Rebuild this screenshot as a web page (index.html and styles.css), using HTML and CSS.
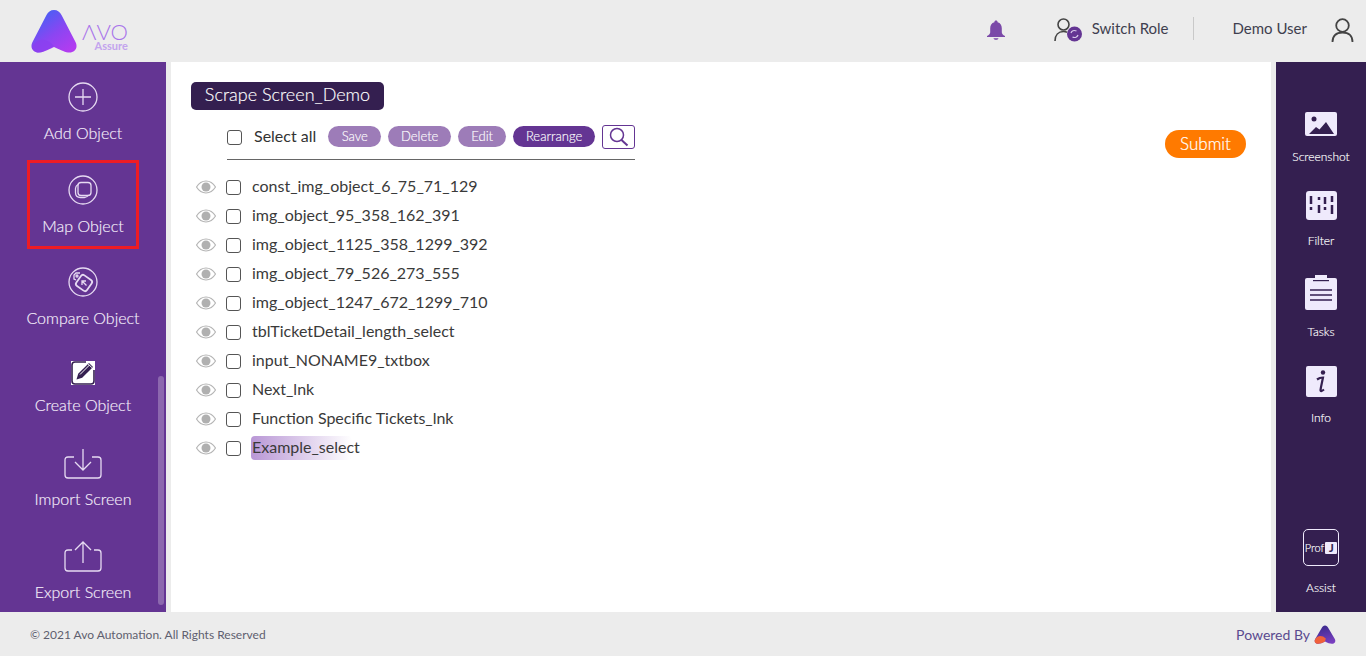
FILE: index.html
```html
<!DOCTYPE html>
<html lang="en">
<head>
  <meta charset="UTF-8" />
  <title>Avo Assure</title>
  <link rel="stylesheet" href="styles.css">
</head>
<body>
  <svg width="0" height="0" class="defs">
    <defs>
      <linearGradient id="logoGrad" x1="0.2" y1="0" x2="0.9" y2="0.9">
        <stop offset="0" stop-color="#3f63f5"/>
        <stop offset="0.55" stop-color="#8a46f2"/>
        <stop offset="1" stop-color="#b23cf0"/>
      </linearGradient>
      <linearGradient id="miniGrad" x1="0.3" y1="0" x2="0.6" y2="1">
        <stop offset="0" stop-color="#3a2a8c"/>
        <stop offset="1" stop-color="#7a3fc0"/>
      </linearGradient>
      <symbol id="eye" viewBox="0 0 20 14">
        <path d="M0.500 7C3 3 6.200 1 10 1s7 2 9.500 6c-2.500 4-5.700 6-9.500 6S3 11 0.500 7z" fill="none" stroke="#b5b5b5" stroke-width="1.200"/>
        <circle cx="10" cy="7" r="4.500" fill="#b0b0b0"/>
      </symbol>
    </defs>
  </svg>

  <!-- header -->
  <header class="topbar">
    <div class="logo">
      <svg class="logo-mark" width="48" height="44" viewBox="0 0 48 44">
        <path d="M24 1c3.600 0 6 2 7.500 5l14 27c3 6-1 10.500-6 10.500-4 0-8-2-15.500-5.500-7 3.500-11.500 5.500-15.500 5.500-5 0-9-4.500-6-10.500l14-27C18 3 20.400 1 24 1z" fill="url(#logoGrad)"/>
        <path d="M2 38c5-9 14-10 22-1-7 3.500-11.500 6.500-15.500 6.500C5 43.500 3 41 2 38z" fill="#8a3ff0" opacity="0.7"/>
      </svg>
      <div class="logo-text">
        <span class="logo-avo">ΛVO</span>
        <span class="logo-sub">Assure</span>
      </div>
    </div>
    <div class="topbar-right">
      <svg class="bell head-icon" width="20" height="20" viewBox="0 0 20 20">
        <path d="M10 0.500c1 0 1.600 0.700 1.600 1.700 2.900 0.800 4.200 3.100 4.200 6v4c0 1.500 1 2.700 3.200 3.800v1H1v-1c2.200-1.100 3.200-2.300 3.200-3.800v-4c0-2.900 1.300-5.200 4.200-6C8.400 1.200 9 0.500 10 0.500z" fill="#7b4aa8"/>
        <path d="M7.500 18.200h5c-0.300 1-1.300 1.500-2.500 1.500s-2.200-0.500-2.500-1.500z" fill="#7b4aa8"/>
      </svg>
      <div class="switch-role">
        <svg class="head-icon" width="28" height="24" viewBox="0 0 28 24">
          <circle cx="9.500" cy="6.500" r="5.500" fill="none" stroke="#444" stroke-width="1.600"/>
          <path d="M1 23c0-6 3.500-9.500 8.500-9.500 1.500 0 2.500 0.300 3.500 0.800" fill="none" stroke="#444" stroke-width="1.600"/>
          <circle cx="20.500" cy="16" r="7.500" fill="#643593"/>
          <path d="M17 15c0.500-2 3-3.200 5.500-2M24 17c-0.500 2-3 3.200-5.500 2" fill="none" stroke="#d8c8ea" stroke-width="1.200"/>
        </svg>
        <span>Switch Role</span>
      </div>
      <div class="divider"></div>
      <span class="user-name">Demo User</span>
      <svg class="head-icon" width="24" height="24" viewBox="0 0 24 24">
        <circle cx="11.500" cy="7.500" r="6.300" fill="none" stroke="#444" stroke-width="1.800"/>
        <path d="M1.500 24c0-6.500 3.500-9.500 10-9.500s10 3 10 9.500" fill="none" stroke="#444" stroke-width="1.800"/>
      </svg>
    </div>
  </header>

  <div class="middle">
    <!-- left menu -->
    <nav class="sidebar">
      <div class="side-item add">
        <svg class="side-icon" width="30" height="30" viewBox="0 0 30 30">
          <circle cx="15" cy="15" r="14" class="ln"/>
          <path d="M15 7v16M7 15h16" class="ln"/>
        </svg>
        <span>Add Object</span>
      </div>
      <div class="side-item active">
        <svg class="side-icon" width="30" height="30" viewBox="0 0 30 30">
          <circle cx="15" cy="15" r="14" class="ln"/>
          <rect x="10" y="7.500" width="13" height="13" rx="3" class="ln"/>
          <path d="M10 9.500c-1.500 1-2.500 2-2.500 4v4c0 3 2 5 5 5h4c2 0 3-1 4-2.500" class="ln"/>
        </svg>
        <span>Map Object</span>
      </div>
      <div class="side-item compare">
        <svg class="side-icon" width="30" height="30" viewBox="0 0 30 30">
          <circle cx="15" cy="15" r="14" class="ln"/>
          <rect x="9.500" y="9.500" width="13" height="13" rx="2.500" transform="rotate(35 16 16)" class="ln2"/>
          <path d="M12 6H8L6 8v4l2 1" class="ln"/>
          <circle cx="9" cy="9" r="1" class="ln"/>
          <path d="M18.500 18.500l-4-4M14 18v-4h4" class="ln"/>
        </svg>
        <span>Compare Object</span>
      </div>
      <div class="side-item create">
        <svg class="side-icon" width="24" height="24" viewBox="0 0 24 24">
          <rect x="0" y="0" width="24" height="24" fill="#fff"/>
          <path d="M15 1H4C2 1 1 2 1 4v16c0 2 1 3 3 3h16c2 0 3-1 3-3V9" fill="none" stroke="#341f50" stroke-width="1.600"/>
          <path d="M5.500 18.500l1.700-5.700L18 2l4 4L11.200 16.800z" fill="#341f50"/>
          <path d="M9 13.500L18.500 4M17 2.800l4 4" stroke="#fff" stroke-width="1" fill="none"/>
        </svg>
        <span>Create Object</span>
      </div>
      <div class="side-item import">
        <svg class="side-icon" width="38" height="32" viewBox="0 0 38 32">
          <path d="M10 9H4c-2 0-3 1-3 3v15c0 2 1 3 3 3h30c2 0 3-1 3-3V12c0-2-1-3-3-3h-6" class="ln"/>
          <path d="M19 1v21M11 14l8 8 8-8" class="ln"/>
        </svg>
        <span>Import Screen</span>
      </div>
      <div class="side-item export">
        <svg class="side-icon" width="38" height="32" viewBox="0 0 38 32">
          <path d="M8 9H4c-2 0-3 1-3 3v15c0 2 1 3 3 3h30c2 0 3-1 3-3V12c0-2-1-3-3-3h-4" class="ln"/>
          <path d="M19 22V1M11 9l8-8 8 8" class="ln"/>
        </svg>
        <span>Export Screen</span>
      </div>
      <div class="side-scroll"></div>
    </nav>

    <!-- main -->
    <main class="content">
      <div class="screen-title">Scrape Screen_Demo</div>
      <div class="top-row">
        <div class="toolbar">
          <input type="checkbox" class="chk">
          <span class="select-all">Select all</span>
          <button class="pill faded save">Save</button>
          <button class="pill faded del">Delete</button>
          <button class="pill faded edit">Edit</button>
          <button class="pill rearrange">Rearrange</button>
          <button class="search-btn">
            <svg width="22" height="20" viewBox="0 0 22 20">
              <circle cx="9" cy="8" r="6.500" fill="none" stroke="#643593" stroke-width="1.500"/>
              <path d="M13.500 13l6 5.500" stroke="#643593" stroke-width="2"/>
            </svg>
          </button>
        </div>
        <button class="submit">Submit</button>
      </div>

      <ul class="objects">
        <li><svg class="eye" width="20" height="14"><use href="#eye"/></svg><input type="checkbox" class="chk"><span>const_img_object_6_75_71_129</span></li>
        <li><svg class="eye" width="20" height="14"><use href="#eye"/></svg><input type="checkbox" class="chk"><span>img_object_95_358_162_391</span></li>
        <li><svg class="eye" width="20" height="14"><use href="#eye"/></svg><input type="checkbox" class="chk"><span>img_object_1125_358_1299_392</span></li>
        <li><svg class="eye" width="20" height="14"><use href="#eye"/></svg><input type="checkbox" class="chk"><span>img_object_79_526_273_555</span></li>
        <li><svg class="eye" width="20" height="14"><use href="#eye"/></svg><input type="checkbox" class="chk"><span>img_object_1247_672_1299_710</span></li>
        <li><svg class="eye" width="20" height="14"><use href="#eye"/></svg><input type="checkbox" class="chk"><span>tblTicketDetail_length_select</span></li>
        <li><svg class="eye" width="20" height="14"><use href="#eye"/></svg><input type="checkbox" class="chk"><span>input_NONAME9_txtbox</span></li>
        <li><svg class="eye" width="20" height="14"><use href="#eye"/></svg><input type="checkbox" class="chk"><span>Next_lnk</span></li>
        <li><svg class="eye" width="20" height="14"><use href="#eye"/></svg><input type="checkbox" class="chk"><span>Function Specific Tickets_lnk</span></li>
        <li><svg class="eye" width="20" height="14"><use href="#eye"/></svg><input type="checkbox" class="chk"><span class="highlight">Example_select</span></li>
      </ul>
    </main>

    <!-- right menu -->
    <aside class="rightbar">
      <div class="right-item shot">
        <svg width="32" height="24" viewBox="0 0 32 24">
          <rect width="32" height="24" rx="2" fill="#efeafc"/>
          <circle cx="9" cy="7" r="2.500" fill="#341f50"/>
          <path d="M4 22l7-7 3.500 2.500L21 10l8 12z" fill="#341f50"/>
        </svg>
        <span>Screenshot</span>
      </div>
      <div class="right-item filter">
        <svg width="31" height="29" viewBox="0 0 31 29">
          <rect width="31" height="29" rx="3" fill="#efeafc"/>
          <path d="M5 5v8M5 16v3M13 6v3M13 14v8M19 6v7M19 16v3M26 5v6M26 14v9" stroke="#341f50" stroke-width="2.500" fill="none"/>
        </svg>
        <span>Filter</span>
      </div>
      <div class="right-item tasks">
        <svg width="32" height="35" viewBox="0 0 32 35">
          <rect x="0" y="3" width="32" height="32" rx="2" fill="#efeafc"/>
          <rect x="10" y="0" width="12" height="5" fill="#efeafc"/>
          <rect x="8" y="5" width="16" height="1.200" fill="#341f50"/>
          <path d="M5 15h22M5 20h22M5 25h22" stroke="#341f50" stroke-width="1.500"/>
        </svg>
        <span>Tasks</span>
      </div>
      <div class="right-item info">
        <svg width="31" height="31" viewBox="0 0 31 31">
          <rect width="31" height="31" rx="2" fill="#efeafc"/>
          <circle cx="17" cy="6.500" r="2.200" fill="#341f50"/>
          <path d="M11 13.500c2-1.500 4-2 6-2-1 5-2 9-2.500 12.500 0 1.500 1 1.500 3.500-0.500" fill="none" stroke="#341f50" stroke-width="2.200"/>
        </svg>
        <span>Info</span>
      </div>
      <div class="right-item assist">
        <div class="prof-box">
          <span class="prof">Prof</span><span class="prof-j">J</span>
        </div>
        <span>Assist</span>
      </div>
    </aside>
  </div>

  <footer class="footer">
    <span class="copy">© 2021 Avo Automation. All Rights Reserved</span>
    <div class="powered">
      <span>Powered By</span>
      <svg width="22" height="19" viewBox="0 0 22 19">
        <path d="M11 0.500c1.500 0 2.500 1 3.300 2.500l6.500 11c1.500 3-0.500 4.800-3 4.800-2 0-4-1-6.800-2.300-2.800 1.300-4.800 2.300-6.800 2.300-2.500 0-4.500-1.800-3-4.800l6.500-11C8.500 1.500 9.500 0.500 11 0.500z" fill="url(#miniGrad)"/>
        <path d="M0.800 15c2-4.500 7-5.500 11-1.500l-0.800 3c-2.800 1.300-4.800 2.300-6.800 2.300-3 0-4-2-3.400-3.800z" fill="#f0603a"/>
      </svg>
    </div>
  </footer>
</body>
</html>
```

FILE: styles.css
```css
* {
  box-sizing: border-box;
}

html, body {
  height: 100%;
}

body {
  margin: 0;
  display: flex;
  flex-direction: column;
  height: 656px;
  overflow: hidden;
  background-color: #ececec;
  font-family: "Lato", "Liberation Sans", sans-serif;
  color: #333;
}

.defs {
  position: absolute;
}

/* header */
.topbar {
  height: 62px;
  flex: none;
  display: flex;
  align-items: center;
  justify-content: space-between;
  padding: 0 11px 0 30px;
}

.logo {
  display: flex;
  align-items: center;
  gap: 4px;
}

.logo-text {
  display: flex;
  flex-direction: column;
  align-items: flex-end;
  padding-top: 10px;
}

.logo-avo {
  font-size: 22px;
  line-height: 19px;
  color: #a874ea;
  font-weight: 300;
}

.logo-sub {
  font-size: 11px;
  line-height: 10px;
  font-weight: 700;
  color: #c3a4ee;
}

.topbar-right {
  display: flex;
  align-items: center;
  font-size: 15px;
  color: #3f3f4f;
  margin-bottom: 6px;
}

.head-icon {
  margin-top: 3px;
}

.bell {
  margin-right: 48px;
}

.switch-role {
  display: flex;
  align-items: center;
  gap: 10px;
}

.divider {
  width: 1px;
  height: 23px;
  background-color: #c9c9c9;
  margin: 0 39px 0 24px;
}

.user-name {
  margin-right: 24px;
}

/* layout */
.middle {
  flex: 1;
  display: flex;
  min-height: 0;
}

/* left menu */
.sidebar {
  position: relative;
  width: 166px;
  flex: none;
  background-color: #643593;
  color: #f6f0fb;
  display: flex;
  flex-direction: column;
  align-items: center;
  padding-top: 20px;
  overflow: hidden;
}

.side-item {
  width: 112px;
  flex: none;
  display: flex;
  flex-direction: column;
  align-items: center;
  font-size: 16px;
  font-weight: 300;
  line-height: 20px;
  gap: 11px;
  -webkit-text-stroke: 0.15px currentColor;
}

.side-item span {
  white-space: nowrap;
}

.side-icon {
  display: block;
  flex: none;
}

.ln {
  fill: none;
  stroke: #e6daf2;
  stroke-width: 1.300;
}

.ln2 {
  fill: none;
  stroke: #e6daf2;
  stroke-width: 1.800;
}

.side-item.add {
  height: 78px;
}

.side-item.active {
  height: 89px;
  padding-top: 15px;
  outline: 3px solid #ed1c24;
  outline-offset: -3px;
}

.side-item.compare {
  height: 94px;
  margin-top: 18px;
}

.side-item.create {
  height: 87px;
  gap: 10px;
}

.side-item.import {
  height: 93px;
  gap: 9px;
}

.side-item.export {
  gap: 9px;
}

.side-scroll {
  position: absolute;
  left: 158px;
  top: 314px;
  width: 6px;
  height: 229px;
  border-radius: 3px;
  background-color: #8c68ae;
}

/* main */
.content {
  flex: 1;
  margin: 0 5px;
  background-color: #fff;
  padding: 20px 25px 0 20px;
  min-width: 0;
}

.screen-title {
  display: inline-block;
  height: 28px;
  width: 193px;
  background-color: #341f50;
  color: #fff;
  border-radius: 5px;
  font-size: 18px;
  font-weight: 300;
  line-height: 24px;
  text-align: center;
  -webkit-text-stroke: 0.15px currentColor;
}

.top-row {
  display: flex;
  justify-content: space-between;
  align-items: flex-start;
}

.toolbar {
  display: flex;
  align-items: center;
  margin: 15px 0 0 36px;
  width: 408px;
  height: 35px;
  padding-bottom: 11px;
  border-bottom: 1px solid #666;
}

.toolbar .chk {
  margin-top: 2px;
}

.select-all {
  font-size: 16px;
  margin-left: 12px;
  margin-right: 12px;
  padding-bottom: 2px;
  white-space: nowrap;
}

.chk {
  appearance: none;
  margin: 0;
  width: 15px;
  height: 15px;
  flex: none;
  background-color: #fff;
  border: 1px solid #555;
  border-radius: 3px;
}

.pill {
  height: 21px;
  border: none;
  border-radius: 11px;
  padding: 0 0 2px;
  font-family: inherit;
  font-size: 13px;
  font-weight: 300;
  color: #fff;
  background-color: #643593;
  -webkit-text-stroke: 0.15px currentColor;
}

.pill.faded {
  background-color: #9d7cb8;
}

.pill.save {
  width: 53px;
  margin-right: 7px;
}

.pill.del {
  width: 63px;
  margin-right: 7px;
}

.pill.edit {
  width: 48px;
  margin-right: 7px;
}

.pill.rearrange {
  width: 82px;
  margin-right: 7px;
}

.search-btn {
  width: 33px;
  height: 24px;
  padding: 0;
  border: 1px solid #643593;
  border-radius: 3px;
  background-color: #fff;
  display: flex;
  align-items: center;
  justify-content: center;
}

.submit {
  margin-top: 20px;
  width: 81px;
  height: 28px;
  border: none;
  border-radius: 14px;
  background-color: #ff7a00;
  color: #fff;
  font-family: inherit;
  font-size: 17px;
  font-weight: 300;
  padding: 0 0 2px;
  -webkit-text-stroke: 0.2px currentColor;
}

.objects {
  list-style: none;
  margin: 12px 0 0;
  padding: 0 0 0 5px;
}

.objects li {
  display: flex;
  align-items: center;
  height: 29px;
  font-size: 16px;
  white-space: nowrap;
}

.eye {
  flex: none;
  margin-right: 10px;
}

.objects .chk {
  margin-top: 2px;
  margin-right: 11px;
}

.objects span {
  color: #3a3a3a;
  padding-bottom: 2px;
}

.objects .highlight {
  display: inline-block;
  width: 101px;
  height: 24px;
  line-height: 21px;
  margin-left: -1px;
  padding: 0 0 0 1px;
  border-radius: 4px;
  background: linear-gradient(to right, #b997d6, #ffffff);
}

/* right menu */
.rightbar {
  width: 90px;
  flex: none;
  background-color: #341f50;
  color: #fff;
  display: flex;
  flex-direction: column;
  align-items: center;
  font-size: 12px;
  font-weight: 300;
  padding-top: 50px;
  -webkit-text-stroke: 0.15px currentColor;
}

.right-item {
  display: flex;
  flex-direction: column;
  align-items: center;
  flex: none;
  line-height: 15px;
}

.right-item svg {
  display: block;
}

.right-item.shot {
  gap: 13px;
  height: 79px;
}

.right-item.filter {
  gap: 13px;
  height: 84px;
}

.right-item.tasks {
  gap: 14px;
  height: 91px;
}

.right-item.info {
  gap: 13px;
}

.right-item.assist {
  margin-top: auto;
  margin-bottom: 17px;
  gap: 14px;
}

.prof-box {
  width: 36px;
  height: 37px;
  border: 1px solid #efeafc;
  border-radius: 5px;
  display: flex;
  align-items: center;
  justify-content: center;
  gap: 1px;
}

.prof {
  font-size: 11px;
  font-weight: 300;
}

.prof-j {
  width: 12px;
  height: 12px;
  background-color: #efeafc;
  color: #341f50;
  font-size: 11px;
  font-weight: 700;
  line-height: 12px;
  text-align: center;
  border-radius: 1px;
}

/* footer */
.footer {
  height: 44px;
  flex: none;
  display: flex;
  align-items: center;
  justify-content: space-between;
  padding: 0 30px;
}

.copy {
  font-size: 12px;
  color: #5f5f6f;
}

.powered {
  display: flex;
  align-items: center;
  gap: 4px;
  font-size: 14px;
  color: #5a4a8f;
}
```
